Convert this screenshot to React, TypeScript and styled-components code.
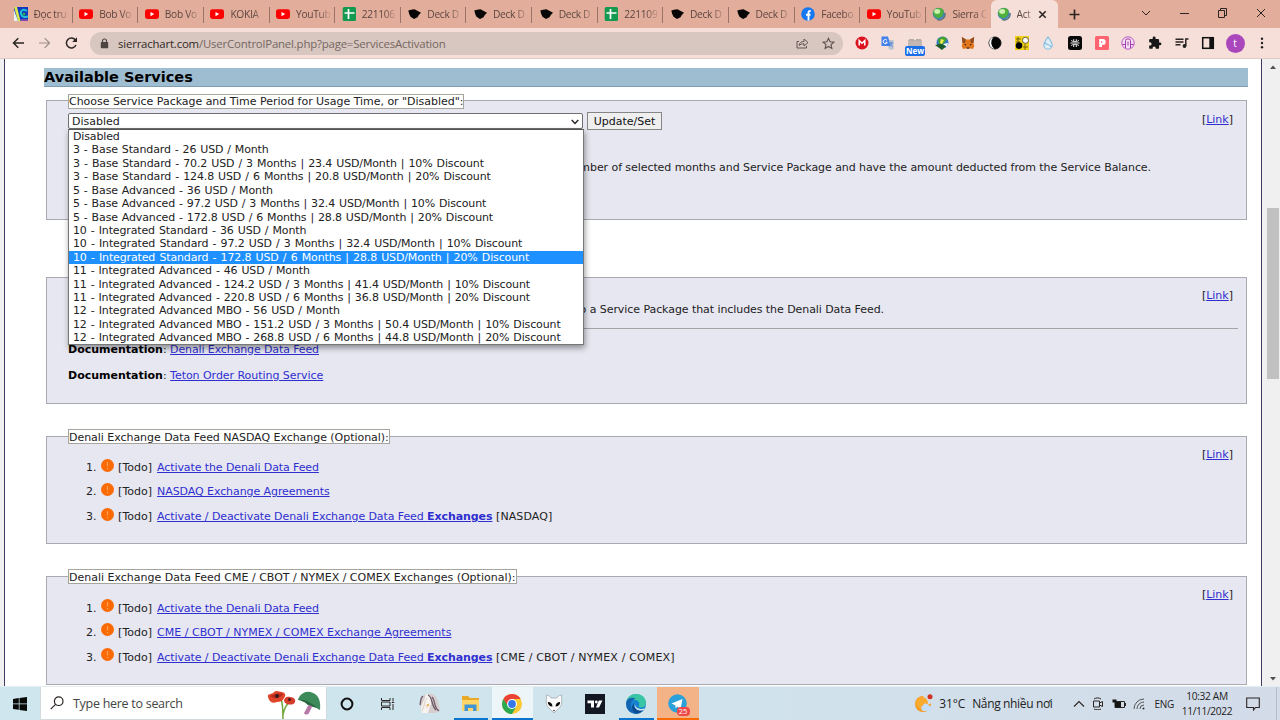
import React from "react";
import styled, { createGlobalStyle, css } from "styled-components";

const GlobalStyle = createGlobalStyle`
  * { box-sizing: border-box; }
  body { margin: 0; background: #fff; overflow: hidden; }
  svg { display: block; flex: none; }
`;
const uiFont = `"Open Sans", "Noto Sans", sans-serif`;
const pageFont = `"DejaVu Sans", Verdana, sans-serif`;

const Screen = styled.div`
  width: 1280px; height: 720px; display: flex; flex-direction: column; overflow: hidden;
  font-family: ${uiFont};
`;

/* ---------- browser chrome ---------- */
const TabStrip = styled.div`
  height: 28px; flex: none; background: #e3ad9b; display: flex; align-items: stretch; padding-left: 7px;
`;
const Tab = styled.div<{ $noLine?: boolean }>`
  width: 65.65px; flex: none; display: flex; align-items: center; padding-left: 6.5px; gap: 6px;
  ${(p) => !p.$noLine && css`
    background: linear-gradient(#9b7468, #9b7468) right 7px / 1px 16px no-repeat;
  `}
`;
const ActiveTab = styled.div`
  width: 67px; flex: none; display: flex; align-items: center; padding-left: 6px; gap: 6px;
  background: #f5dfd8; border-radius: 6px 6px 0 0; margin-left: -1px;
`;
const TabTitle = styled.span<{ $w: number }>`
  width: ${(p) => p.$w}px; white-space: nowrap; font-size: 10.2px; line-height: 28px; color: #5c4640;
  letter-spacing: -0.3px;
  mask-image: linear-gradient(90deg, #000 65%, rgba(0, 0, 0, 0.15) 100%);
`;
const WindowButtons = styled.div`
  margin-left: auto; display: flex; align-items: center; gap: 27.5px; padding: 0 14.5px 2px 0;
`;
const NewTab = styled.div` display: flex; align-items: center; padding-left: 11px; `;

const Toolbar = styled.div`
  height: 31px; flex: none; background: #f5dfd8; border-bottom: 1px solid #dccbc6; display: flex; align-items: center; padding-left: 12px;
`;
const NavButtons = styled.div` display: flex; gap: 14px; width: 78px; `;
const Omnibox = styled.div`
  width: 753px; height: 23px; border-radius: 12px; background: #d8c6c0; display: flex; align-items: center; padding: 0 8px 0 10px;
  font-size: 11.4px; color: #746661; letter-spacing: -0.18px;
`;
const Url = styled.span` margin-left: 9px; flex: 1; white-space: nowrap; b { font-weight: 400; color: #2f2927; } `;
const OmniIcons = styled.div` display: flex; gap: 13px; align-items: center; `;
const Extensions = styled.div` display: flex; padding-left: 5.5px; `;
const Ext = styled.div` width: 26.67px; height: 24px; display: flex; align-items: center; justify-content: center; flex: none; `;
const NewBadge = styled.span`
  width: 20px; height: 10px; border-radius: 2px; background: #1a6fe8; color: #fff; font-size: 8px; line-height: 10px; font-weight: 700;
  text-align: center; margin-top: -1px;
`;
const ExtStack = styled.div` display: flex; flex-direction: column; align-items: center; padding-top: 8px; `;
const Avatar = styled.div`
  width: 19px; height: 19px; border-radius: 50%; background: #ab47bc; color: #fff; font-size: 10px; line-height: 18px; text-align: center;
`;

/* ---------- page ---------- */
const Viewport = styled.div` height: 627px; flex: none; display: flex; background: #f0f0f0; overflow: hidden; `;
const Page = styled.main`
  width: 1258px; margin-left: 4px; border: solid #3f3c66; border-width: 0 1px; background: #fff; padding: 9px 13px 0 41px;
  font: 11px/13px ${pageFont}; color: #222; flex: none; overflow: hidden;
`;
const Heading = styled.h2`
  margin: 0 0 0 -2px; height: 19px; width: 1204px; background: #9fbdd0; border-bottom: 1px solid #7d9db5; color: #000;
  font: bold 14.5px/19px ${pageFont}; white-space: nowrap;
`;
const Section = styled.section<{ $h: number; $mt: number }>`
  width: 1201px; height: ${(p) => p.$h}px; margin-top: ${(p) => p.$mt}px; border: 1px solid #a9a9b2; background: #e7e7f1;
  padding: 0 8px 0 21px; display: flex; flex-direction: column; align-items: stretch;
`;
const Legend = styled.div<{ $w: number; $ls?: number; $drop?: number }>`
  width: ${(p) => p.$w}px; height: 15px; margin-top: ${(p) => -8 + (p.$drop || 0)}px; flex: none; border: 1px solid #a5a59d; background: #fff;
  line-height: ${(p) => (p.$drop ? 14 : 15)}px; white-space: nowrap; letter-spacing: ${(p) => p.$ls || 0}px;
`;
const Split = styled.div` display: flex; justify-content: space-between; padding-right: 5px; `;
const LinkTag = styled.span` margin-top: 3px; line-height: 15px; `;
const A = styled.a<{ $ls?: number }>`
  color: #2f2fd0; text-decoration: underline; text-underline-offset: 1px; letter-spacing: ${(p) => p.$ls || 0}px;
`;
const FormRow = styled.div` display: flex; gap: 4px; margin-top: 3px; height: 18px; align-items: center; `;
const Select = styled.div`
  position: relative; width: 515px; height: 16px; border: 1px solid #6f6f6f; border-radius: 2px; background: #fff; display: flex;
  align-items: center; justify-content: space-between; padding: 1px 3px 0;
`;
const Menu = styled.div`
  position: absolute; z-index: 2; left: -1px; top: 15px; width: 516px; height: 216px; border: 1px solid #777; border-top-color: #555; background: #fff;
  box-shadow: 1px 3px 6px rgba(0, 0, 0, 0.4); display: flex; flex-direction: column; overflow: hidden;
`;
const Option = styled.div<{ $on?: boolean; $ws: number }>`
  height: 13.43px; line-height: 13.4px; padding-left: 4px; white-space: nowrap; flex: none;
  word-spacing: ${(p) => 0.7 + p.$ws}px; letter-spacing: -0.135px;
  ${(p) => p.$on && css` background: #1e90ff; color: #fff; `}
`;
const Button = styled.button`
  width: 75px; height: 18px; padding: 1px 0 0; border: 1px solid #858585; background: #efefef; font: 11px/14px ${pageFont}; color: #111;
`;
const HiddenControl = styled.div` width: 60px; height: 18px; margin-top: 12px; border: 1px solid #858585; background: #efefef; flex: none; `;
const Note = styled.p<{ $mt: number; $w: number }>`
  margin: ${(p) => p.$mt}px 0 0; width: ${(p) => p.$w}px; text-align: right; white-space: nowrap; letter-spacing: -0.07px;
`;
const Rule = styled.div` height: 1px; background: #a3a3a8; margin-top: 12px; flex: none; `;
const Doc = styled.p<{ $mt: number }>` margin: ${(p) => p.$mt}px 0 0; b { color: #000; } `;
const Todos = styled.div<{ $drop: number }>`
  padding-left: 18px; margin-top: 16px; display: flex; flex-direction: column;
  svg { transform: translateY(${(p) => -p.$drop}px); }
  padding-top: ${(p) => p.$drop}px;
`;
const Todo = styled.div` height: 24.4px; line-height: 15px; display: flex; white-space: pre; svg { margin: -1px 4.6px 0 4px; } `;
const Tag = styled.span<{ $w?: number; $ls?: number }>`
  ${(p) => p.$w && css` width: ${p.$w}px; `} letter-spacing: ${(p) => p.$ls || 0}px;
`;

const ScrollBar = styled.div`
  margin-left: auto; width: 14px; display: flex; flex-direction: column; align-items: center; padding: 6px 0 5px;
`;
const Thumb = styled.div` width: 12px; height: 171px; background: #c1c1c1; margin: 139px 0 auto; `;

/* ---------- taskbar ---------- */
const Taskbar = styled.footer`
  height: 34px; flex: none; display: flex; align-items: stretch; background: linear-gradient(90deg, #cfe6ee, #cfe4ec 45%, #d3dbe9);
  border-top: 1px solid #e4edf2;
`;
const Start = styled.div` width: 40px; display: flex; align-items: center; justify-content: center; `;
const Search = styled.div`
  width: 287px; margin-right: -1px; background: #fff; border: 1px solid #d2dadd; border-top: 0; display: flex; align-items: center;
  padding: 0 4px 0 9px; font-size: 12.5px; color: #444; letter-spacing: -0.28px; gap: 9px; white-space: nowrap;
  svg:last-child { margin-left: auto; }
`;
const AppSlot = styled.div<{ $line?: string; $bg?: string }>`
  width: 41.4px; display: flex; align-items: center; justify-content: center; position: relative;
  background: ${(p) => p.$bg || "transparent"};
  ${(p) => p.$line && css` box-shadow: inset 0 -2px ${p.$line}; `}
  ${(p) => p.$line && !p.$bg && css` margin: 0 3.5px; width: 34.4px; `}
`;
const Count = styled.span`
  position: absolute; right: 9px; bottom: 4px; width: 13px; height: 9px; border-radius: 4px; background: #f04848; color: #fff; font-size: 7.5px;
  line-height: 9px; text-align: center;
`;
const Tray = styled.div` margin-left: auto; display: flex; align-items: center; color: #222; white-space: nowrap; `;
const Weather = styled.span` font-size: 12px; margin: 0 20px 0 6px; display: flex; gap: 7px; letter-spacing: -0.1px; em { font-style: normal; letter-spacing: -0.36px; } `;
const TrayIcons = styled.div` display: flex; gap: 7.5px; align-items: center; `;
const Lang = styled.span` font-size: 10px; margin-left: 9.5px; letter-spacing: -0.3px; `;
const Clock = styled.div` width: 56px; margin: 0 11px 0 5px; text-align: center; font-size: 10.2px; line-height: 15px; letter-spacing: -0.35px; `;
const Edge = styled.div` width: 4px; height: 100%; margin-left: 16px; border-left: 1px solid #b5bdc9; `;

/* ---------- icons ---------- */
const YouTube = () => (
  <svg width="14" height="14" viewBox="0 0 14 14"><rect y="2.2" width="14" height="9.8" rx="2.4" fill="#f00" /><path d="M5.5 5v4.2L9.2 7.1z" fill="#fff" /></svg>
);
const Sheet = () => (
  <svg width="14" height="14" viewBox="0 0 14 14"><rect x=".7" width="13.3" height="14" rx="1.5" fill="#149a50" /><path d="M6.500 2v10M2.500 6h10" stroke="#fff" strokeWidth="1.700" /></svg>
);
const Deck = () => (
  <svg width="14" height="14" viewBox="0 0 14 14"><path d="M1.300 3.500 4 2.800 7.500 2.200 14 5.800 11.800 8 10.500 10.300 7 12 3.500 9.800 2.200 7z" fill="#080606" /></svg>
);
const Globe = () => (
  <svg width="14" height="14" viewBox="0 0 14 14"><path d="M5 12.500c5 1.500 8.500-2 8-6.500" stroke="#5d7183" fill="none" strokeWidth="1.600" /><circle cx="6.600" cy="6.600" r="5.900" fill="#3f86b4" /><path d="M1.200 4.500C3 .5 9 0 11 2.600c2 3-1 8-4.600 8.600C2.500 10.600.600 7 1.200 4.500z" fill="#4fae3c" /><ellipse cx="5.200" cy="4.500" rx="3" ry="2.400" fill="#c9f0ac" /></svg>
);
const Facebook = () => (
  <svg width="14" height="14" viewBox="0 0 14 14"><circle cx="7" cy="7" r="6.800" fill="#1577f2" /><path d="M7.500 13.500V6c0-1.600.6-2.300 2.300-2.100M5 7.700h4.500" stroke="#fff" strokeWidth="1.900" fill="none" /></svg>
);
const Novel = () => (
  <svg width="14" height="14" viewBox="0 0 14 14"><rect width="14" height="14" fill="#1238c0" /><path d="M0 0h3l3.500 14H4z" fill="#d9e84a" /><path d="M0 3l4 11H0z" fill="#e8f2f4" /><path d="M13 4C9 1 6 4 7 7s4 4 7 2" stroke="#23c2da" strokeWidth="2" fill="none" /><circle cx="10" cy="7" r="1.500" fill="#2cad54" /><path d="M7 13h7" stroke="#e9579b" /></svg>
);
const line = { fill: "none", stroke: "#2c2523", strokeWidth: 1.5 } as const;

type Kind = "yt" | "sheet" | "deck" | "fb" | "globe" | "novel";
const favicons: Record<Kind, React.ReactElement> = { yt: <YouTube />, sheet: <Sheet />, deck: <Deck />, fb: <Facebook />, globe: <Globe />, novel: <Novel /> };
const tabs: [Kind, string][] = [
  ["novel", "Đọc tru"], ["yt", "Bob Vo"], ["yt", "Bob Vo"], ["yt", "KOKIA"], ["yt", "YouTub"], ["sheet", "221106"],
  ["deck", "Deck D"], ["deck", "Deck D"], ["deck", "Deck D"], ["sheet", "221109"], ["deck", "Deck D"], ["deck", "Deck D"],
  ["fb", "Facebo"], ["yt", "YouTub"], ["globe", "Sierra C"],
];

const extensions: React.ReactElement[] = [
  <svg width="14" height="14" viewBox="0 0 14 14"><circle cx="7" cy="7" r="6.500" fill="#dc1420" /><path d="M4.200 9.500v-5L7 7.300l2.800-2.800v5" stroke="#fff" strokeWidth="1.500" fill="none" /></svg>,
  <svg width="14" height="14" viewBox="0 0 14 14"><path d="M6 4h6.500v9.500H8z" fill="#b8c2d2" /><path d="M.5.5H7l2.600 9.500H.5z" fill="#4480ec" /><path d="M6 4.300a2.100 2.100 0 1 0 .3 2H4.600" stroke="#fff" fill="none" /><path d="M8.500 7h4M10.500 6c0 2-1 3.500-2 4M9.500 8l2.500 3" stroke="#4c80cf" strokeWidth=".8" fill="none" /></svg>,
  <ExtStack><svg width="14" height="8" viewBox="0 0 14 8"><rect x="0" y="1" width="14" height="7" rx="1" fill="#c2b7b3" /><rect x="1" y="0" width="5" height="2" fill="#b8aca8" /><rect x="8" y="0" width="5" height="2" fill="#b8aca8" /></svg><NewBadge>New</NewBadge></ExtStack>,
  <svg width="14" height="14" viewBox="0 0 14 14"><circle cx="7.500" cy="6.500" r="6" fill="#357ac0" /><path d="M3 3l5-2.500 4 2-3 5-5 1z" fill="#49a22e" /><path d="M6 3l3 1-2 4-2-1z" fill="#f2ec54" /><path d="M0 9l5-1 7 1-5 5z" fill="#1d5b28" /><path d="M8 8l5-1-1 4z" fill="#fff" /></svg>,
  <svg width="14" height="14" viewBox="0 0 14 14"><path d="M.8 1 5 3.500h4L13.200 1l-.7 6 .8 3-1.300 3-3.300-.8-1.700 1-1.700-1L2 13 .7 10l.8-3z" fill="#e2761b" /><path d="M.8 1 5 3.500 4 7H1.500zM13.200 1 9 3.500 10 7h2.500z" fill="#8f4c20" /><path d="m5 8-2 .5 2 1zM9 8l2 .5-2 1zM5.500 11.500h3v1h-3z" fill="#222" /></svg>,
  <svg width="14" height="14" viewBox="0 0 14 14"><circle cx="7" cy="7" r="6" fill="#050505" stroke="#111" /><path d="M4.500 1.700a8 8 0 0 0 1 10.800A6 6 0 0 1 4.500 1.700z" fill="#fff" stroke="#fff" strokeWidth=".7" /></svg>,
  <svg width="14" height="14" viewBox="0 0 14 14"><rect width="14" height="14" fill="#f0cf18" /><path d="M1 3h5M1 6h4M3 1v6M8 11h5M10 8v6" stroke="#614f07" strokeWidth=".8" /><circle cx="4" cy="9.600" r="3.300" fill="#000" /><circle cx="10.500" cy="4.300" r="3" fill="#fff" stroke="#111" strokeWidth=".6" /></svg>,
  <svg width="14" height="14" viewBox="0 0 14 14"><path d="M7 1c2 3 4.200 5 4.200 8a4.200 4.200 0 0 1-8.400 0C2.800 6 5 4 7 1zM4 6.500c1 2.800 5 1.200 6 4.500" fill="#dfedf5" stroke="#7dbbe4" strokeWidth="1.100" /></svg>,
  <svg width="14" height="14" viewBox="0 0 14 14"><rect width="14" height="14" rx="2.500" fill="#080808" /><path d="M3 4.200c1.500 2 6.500 2 8 0M3 9.800c1.500-2 6.500-2 8 0M5.700 3.200v2M8.300 3.200v2M5.700 9v2M8.300 9v2M2.500 7h9" stroke="#eee" strokeWidth="1" fill="none" /></svg>,
  <svg width="14" height="14" viewBox="0 0 14 14"><rect width="14" height="14" rx="1.500" fill="#ff6370" /><path d="M4.200 3h3.600a2.900 2.900 0 0 1 0 5.800H7V11H4.200z" fill="#fff" /><path d="M6.700 5v2" stroke="#ff6370" /></svg>,
  <svg width="14" height="14" viewBox="0 0 14 14"><circle cx="7" cy="7" r="6.200" fill="#f4dff0" stroke="#bb56c4" /><path d="M1.500 8.500h3V4.500a1.500 1.500 0 0 1 1.500-1.500h2a1.500 1.500 0 0 1 1.500 1.500v4h3M4.500 12V8M9.500 12V8M7 9.500V5.500" stroke="#a13bb0" fill="none" /></svg>,
  <svg width="14" height="14" viewBox="0 0 24 24"><path d="M20.500 11H19V7a2 2 0 0 0-2-2h-4V3.500a2.500 2.500 0 0 0-5 0V5H4a2 2 0 0 0-2 2v3.800h1.500a2.700 2.700 0 0 1 0 5.400H2V20a2 2 0 0 0 2 2h3.800v-1.500a2.700 2.700 0 0 1 5.400 0V22H17a2 2 0 0 0 2-2v-4h1.500a2.500 2.500 0 0 0 0-5z" fill="#171717" /></svg>,
  <svg width="14" height="14" viewBox="0 0 14 14"><path d="M.5 3.200h8M.5 6h8M.5 8.800h5" {...line} strokeWidth={1.400} /><path d="M13.500 3h-2.700v7" {...line} /><circle cx="9.500" cy="10" r="1.900" fill="#222" /></svg>,
  <svg width="14" height="14" viewBox="0 0 14 14"><rect x="1.700" y="1.700" width="10.600" height="10.600" {...line} stroke="#111" /><path d="M8.300 1.700h4v10.600h-4z" fill="#111" /></svg>,
  <Avatar>t</Avatar>,
  <svg width="14" height="14" viewBox="0 0 14 14"><g fill="#222"><circle cx="7" cy="2.800" r="1.200" /><circle cx="7" cy="7" r="1.200" /><circle cx="7" cy="11.200" r="1.200" /></g></svg>,
];

const Chrome = () => (
  <>
    <TabStrip>
      {tabs.map(([kind, title], i) => (
        <Tab key={i} $noLine={i === tabs.length - 1}>{favicons[kind]}<TabTitle $w={34}>{title}</TabTitle></Tab>
      ))}
      <ActiveTab>
        <Globe /><TabTitle $w={15}>Act</TabTitle>
        <svg width="9" height="9" viewBox="0 0 9 9"><path d="m1.300 1.300 6.400 6.400m0-6.400L1.300 7.700" {...line} strokeWidth={1.600} /></svg>
      </ActiveTab>
      <NewTab><svg width="11" height="11" viewBox="0 0 11 11"><path d="M5.500.5v10M.5 5.500h10" {...line} strokeWidth={1.700} /></svg></NewTab>
      <WindowButtons>
        <svg width="10" height="10" viewBox="0 0 10 10"><path d="m1 3 4 4 4-4" {...line} strokeWidth={1} /></svg>
        <svg width="11" height="10" viewBox="0 0 11 10"><path d="M1 5.500h9" {...line} strokeWidth={1} /></svg>
        <svg width="11" height="10" viewBox="0 0 11 10"><path d="M1.500 2.500h6v7h-6zM3.500 2.500v-2h6v7h-2" {...line} strokeWidth={1} /></svg>
        <svg width="10" height="10" viewBox="0 0 10 10"><path d="m1 1 8 8m0-8L1 9" {...line} strokeWidth={1} /></svg>
      </WindowButtons>
    </TabStrip>
    <Toolbar>
      <NavButtons>
        <svg width="13" height="12" viewBox="0 0 13 12"><path d="M12 6H1.500M6.300 1.200 1.500 6l4.800 4.800" {...line} /></svg>
        <svg width="12" height="12" viewBox="0 0 12 12"><path d="M0 6h10.500M5.700 1.200 10.500 6l-4.800 4.800" {...line} stroke="#9d8d88" strokeWidth={1.200} /></svg>
        <svg width="13" height="12" viewBox="0 0 13 12"><path d="M11 8A5 5 0 1 1 10.300 2.800L11.500 4" {...line} /><path d="M12 .2v4.800H7.200z" fill="#2c2523" /></svg>
      </NavButtons>
      <Omnibox>
        <svg width="9" height="11" viewBox="0 0 9 11"><rect x=".8" y="4" width="7.400" height="6.300" rx=".8" fill="#4c4542" /><path d="M2.500 4.500V3a2 2 0 0 1 4 0v1.500" {...line} stroke="#4c4542" strokeWidth={1.100} /></svg>
        <Url><b>sierrachart.com</b>/UserControlPanel.php?page=ServicesActivation</Url>
        <OmniIcons>
          <svg width="13" height="12" viewBox="0 0 13 12"><path d="M3 4.500H1V11h9.500V9M3 8.500c.5-3 2.500-4 5-4V2L12 5.600 8 9V6.800c-2.300 0-3.800.5-5 1.700z" {...line} stroke="#625652" strokeWidth={1} /></svg>
          <svg width="13" height="13" viewBox="0 0 24 24"><path d="m12 2.500 2.900 6.400 7 .7-5.300 4.600 1.600 6.800-6.200-3.600L5.800 21l1.600-6.800-5.300-4.600 7-.7z" {...line} stroke="#5b4f4b" strokeWidth={2} /></svg>
        </OmniIcons>
      </Omnibox>
      <Extensions>{extensions.map((icon, i) => <Ext key={i}>{icon}</Ext>)}</Extensions>
    </Toolbar>
  </>
);

const options = [
  "Disabled", "3 - Base Standard - 26 USD / Month", "3 - Base Standard - 70.2 USD / 3 Months | 23.4 USD/Month | 10% Discount",
  "3 - Base Standard - 124.8 USD / 6 Months | 20.8 USD/Month | 20% Discount", "5 - Base Advanced - 36 USD / Month",
  "5 - Base Advanced - 97.2 USD / 3 Months | 32.4 USD/Month | 10% Discount", "5 - Base Advanced - 172.8 USD / 6 Months | 28.8 USD/Month | 20% Discount",
  "10 - Integrated Standard - 36 USD / Month", "10 - Integrated Standard - 97.2 USD / 3 Months | 32.4 USD/Month | 10% Discount",
  "10 - Integrated Standard - 172.8 USD / 6 Months | 28.8 USD/Month | 20% Discount", "11 - Integrated Advanced - 46 USD / Month",
  "11 - Integrated Advanced - 124.2 USD / 3 Months | 41.4 USD/Month | 10% Discount", "11 - Integrated Advanced - 220.8 USD / 6 Months | 36.8 USD/Month | 20% Discount",
  "12 - Integrated Advanced MBO - 56 USD / Month", "12 - Integrated Advanced MBO - 151.2 USD / 3 Months | 50.4 USD/Month | 10% Discount",
  "12 - Integrated Advanced MBO - 268.8 USD / 6 Months | 44.8 USD/Month | 20% Discount",
];
const wordGap = (o: string) => (o.includes("Base") ? -0.1 : o.includes("Standard") ? 0 : o.includes("MBO") ? 0 : -0.1) + (o.includes("Standard") && o.includes("|") ? 0.13 : 0);

const SectionLink = () => <LinkTag>[<A>Link</A>]</LinkTag>;
const Warn = () => (
  <svg width="13" height="13" viewBox="0 0 13 13"><circle cx="6.500" cy="6.500" r="6.500" fill="#fa6a05" /><path d="M6.500 3v4.500M6.500 9v1.200" stroke="#ffa45c" strokeWidth="1.100" /></svg>
);
type ExchangeProps = { h: number; title: string; w: number; ls: number; agreement: string; agreementLs: number; names: string; namesLs: number; drop: number };
const Exchange = (p: ExchangeProps) => (
  <Section $h={p.h} $mt={32}>
    <Legend $w={p.w} $ls={p.ls}>{p.title}</Legend>
    <Split>
      <Todos $drop={p.drop}>
        <Todo>1.<Warn /><Tag $w={39}>[Todo]</Tag><A $ls={-0.1}>Activate the Denali Data Feed</A></Todo>
        <Todo>2.<Warn /><Tag $w={39}>[Todo]</Tag><A $ls={p.agreementLs}>{p.agreement}</A></Todo>
        <Todo>3.<Warn /><Tag $w={39}>[Todo]</Tag><A $ls={-0.09}>Activate / Deactivate Denali Exchange Data Feed <b>Exchanges</b></A><Tag $ls={p.namesLs}> [{p.names}]</Tag></Todo>
      </Todos>
      <SectionLink />
    </Split>
  </Section>
);

const Content = () => (
  <Viewport>
    <Page>
      <Heading>Available Services</Heading>
      <Section $h={120} $mt={13}>
        <Legend $w={396} $ls={-0.03} $drop={1}>Choose Service Package and Time Period for Usage Time, or "Disabled":</Legend>
        <Split>
          <FormRow>
            <Select>
              Disabled
              <svg width="8" height="6" viewBox="0 0 8 6"><path d="m.7 1 3.300 3.500L7.300 1" {...line} /></svg>
              <Menu>{options.map((o, i) => <Option key={o} $on={i === 9} $ws={wordGap(o)}>{o}</Option>)}</Menu>
            </Select>
            <Button>Update/Set</Button>
          </FormRow>
          <SectionLink />
        </Split>
        <HiddenControl />
        <Note $mt={1} $w={1083}>number of selected months and Service Package and have the amount deducted from the Service Balance.</Note>
      </Section>
      <Section $h={127} $mt={57}>
        <Legend $w={396} />
        <Split><span /><SectionLink /></Split>
        <Note $mt={0} $w={816}>to a Service Package that includes the Denali Data Feed.</Note>
        <Rule />
        <Doc $mt={14}><b>Documentation</b>: <A $ls={-0.12}>Denali Exchange Data Feed</A></Doc>
        <Doc $mt={13}><b>Documentation</b>: <A $ls={-0.04}>Teton Order Routing Service</A></Doc>
      </Section>
      <Exchange h={108} w={322} ls={-0.04} drop={0} title="Denali Exchange Data Feed NASDAQ Exchange (Optional):" agreement="NASDAQ Exchange Agreements" agreementLs={-0.08} names="NASDAQ" namesLs={0.1} />
      <Exchange h={109} w={449} ls={0} drop={1} title="Denali Exchange Data Feed CME / CBOT / NYMEX / COMEX Exchanges (Optional):" agreement="CME / CBOT / NYMEX / COMEX Exchange Agreements" agreementLs={0.02} names="CME / CBOT / NYMEX / COMEX" namesLs={0.15} />
    </Page>
    <ScrollBar>
      <svg width="6" height="4" viewBox="0 0 6 4"><path d="M0 4 3 .5 6 4z" fill="#505050" /></svg>
      <Thumb />
      <svg width="6" height="4" viewBox="0 0 6 4"><path d="m0 0 3 3.500L6 0z" fill="#505050" /></svg>
    </ScrollBar>
  </Viewport>
);

const TaskBar = () => (
  <Taskbar>
    <Start><svg width="14" height="14" viewBox="0 0 14 14"><path d="M0 2 5.800 1.100v5.500H0zM6.500 1 14 0v6.600H6.500zM0 7.300h5.800v5.500L0 12zM6.500 7.300H14V14l-7.500-1z" fill="#080808" /></svg></Start>
    <Search>
      <svg width="14" height="14" viewBox="0 0 14 14"><circle cx="8.700" cy="5.200" r="4.300" {...line} strokeWidth={1.200} /><path d="M5.600 8.300.7 13.200" {...line} strokeWidth={1.200} /></svg>
      Type here to search
      <svg width="55" height="32" viewBox="0 0 55 32">
        <path d="M14 12c2 5 2 12 2 20M23 14c-4 4-6 8-7 14" stroke="#6fa53c" strokeWidth="1.500" fill="none" />
        <path d="M1 10C0 6 5 8 7 5c3-2 5 0 8 0 4 1 4 4 2 6-1 3-4 4-7 4-4 2-8 0-9-5z" fill="#e04529" /><path d="M3 9c4-2 9-3 13-2-2 4-8 6-13 2z" fill="#b82b1e" /><circle cx="10" cy="9" r="1.900" fill="#301a1a" />
        <path d="M17 13c1-3 3-4 6-3 4 0 6 3 5 5-1 3-5 3-8 2-2-1-3-2-3-4z" fill="#d63c2a" /><circle cx="22.500" cy="12.500" r="1.600" fill="#4a1c1c" />
        <path d="M42 17 37 26c1 2 4 2 5 0l4-8z" fill="#b77aa8" /><path d="M31 13c2-7 9-10 15-7 6 2 8 9 7 17-3-2-4-3-7-3-3-3-5-1-7-4-2-1-5-3-8-3z" fill="#3d8a5a" /><path d="M31 13c6-1 13 2 22 10-3-2-4-3-7-3-3-3-5-1-7-4-2-1-5-3-8-3z" fill="#28663f" />
      </svg>
    </Search>
    <AppSlot><svg width="14" height="14" viewBox="0 0 14 14"><circle cx="7" cy="7" r="5.400" fill="none" stroke="#111" strokeWidth="2" /></svg></AppSlot>
    <AppSlot><svg width="16" height="14" viewBox="0 0 16 14"><path d="M1.500 1v2.500h8.500V1M1.500 13v-2.500h8.500V13M1.500 5h8.500v4H1.500zM13 1v3.500M13 7v6M11.800 5.500h2.400" {...line} strokeWidth={1} /></svg></AppSlot>
    <AppSlot><svg width="21" height="21" viewBox="0 0 21 21"><path d="M3 19C0 12 1 4 7 1c6-2 10 1 12 7l2 9-4 3H4z" fill="#d6cdce" /><path d="M7 1c4 0 5 4 5 9l-3 10H3C0 12 5 11 7 1z" fill="#f8f3ef" /><path d="M13 4c4 4 1 10 7 14M9 2c5 2 3 11 8 15M4 3C1 5 2 8 1 12" stroke="#6c5966" fill="none" strokeWidth="1.300" /><path d="M8 5C5 8 6 12 3 18" stroke="#d8d0cc" fill="none" /><path d="M6 12h4l-2 4z" fill="#f1d9c6" /><circle cx="9" cy="12" r="1" fill="#d9a83d" /></svg></AppSlot>
    <AppSlot $line="#0a74cf"><svg width="19" height="17" viewBox="0 0 19 17"><path d="M1 1h6l2 2h9v13H1z" fill="#e9a927" /><path d="M1 5h17v11H1z" fill="#fdd667" /><path d="M3.500 16V9.500h12V16H12v-3H7v3z" fill="#3f95d6" /></svg></AppSlot>
    <AppSlot $bg="#edf5f8" $line="#0a74cf"><svg width="20" height="20" viewBox="0 0 20 20"><circle cx="10" cy="10" r="10" fill="#fcc934" /><path d="M10 5H18.660A10 10 0 0 0 1.340 5l4.300 7.500z" fill="#ea4335" /><path d="M1.340 5A10 10 0 0 0 10 20l4.330-7.500L10 10H4.500z" fill="#2da94f" /><circle cx="10" cy="10" r="5" fill="#fff" /><circle cx="10" cy="10" r="3.900" fill="#3377e8" /></svg></AppSlot>
    <AppSlot><svg width="18" height="20" viewBox="0 0 18 20"><path d="M1.500 1c3 .5 4 1.500 4.500 3h6c.5-1.500 1.500-2.500 4.500-3l.3 8c-.8 4-2.800 5-4.300 6.500L9 19l-3.500-3.500C4 14 2 13 1.200 9z" fill="#fbfbfb" stroke="#9ca3a6" strokeWidth=".7" /><path d="M2.800 8c3 0 4.700 2 4.700 4.500-3 0-4.700-2-4.700-4.500zM15.200 8c-3 0-4.700 2-4.700 4.500 3 0 4.700-2 4.700-4.500zM8 16h2l-1 1.500z" fill="#080808" /></svg></AppSlot>
    <AppSlot><svg width="20" height="20" viewBox="0 0 20 20"><rect width="20" height="20" fill="#121722" /><path d="M2.500 6.500h6.500v7H6V9.300H2.500zM13.800 6.500H17.500l-3.500 7h-3z" fill="#fff" /><circle cx="11.300" cy="8" r="1.400" fill="#fff" /></svg></AppSlot>
    <AppSlot $line="#0a74cf"><svg width="20" height="20" viewBox="0 0 20 20"><circle cx="10" cy="10" r="10" fill="#1583d2" /><path d="M.3 8C1 3 5 0 10 0c6 0 10 4 10 8.500 0 3-2 5-5 5-2 0-3-1-2-2 1-2 0-5-4-5.500C5 5 2 6 .3 8z" fill="#39c6a5" /><path d="M.3 8C2 3 7 3 10 5c-4 0-6 4-5 8 1 3 3 5 6 6.900C4 20-.5 15 .3 8z" fill="#1464b4" /><path d="M8.500 9c-2 5 4 9 9.500 6.500-1.500 2-4 4-7 4.300C6 18 4 12 8.500 9z" fill="#0b4d91" /><path d="M9 9c-1 5 5 7 10 5.500l-1 1.500C13 18 7 15 9 9z" fill="#d0e5ec" /></svg></AppSlot>
    <AppSlot $bg="#f4b386" $line="#fb6b05"><svg width="19" height="19" viewBox="0 0 19 19"><circle cx="9.500" cy="9.500" r="9.300" fill="#2ba0d9" /><path d="m3.500 9.500 11-4.500-2 10-3.200-2.400-1.600 1.600-.5-3z" fill="#fff" /></svg><Count>25</Count></AppSlot>
    <Tray>
      <svg width="19" height="20" viewBox="0 0 19 20"><circle cx="9" cy="10" r="8" fill="#f59a20" /><circle cx="13" cy="6" r="5" fill="#d4deeb" /><circle cx="8" cy="9" r="6" fill="#f9ab30" /><path d="M9 17a3 3 0 0 1 0-5.500c1-3 5-2 5.500 0 4 0 4 5.500 1 5.500z" fill="#c5ddf8" /><circle cx="16" cy="2.700" r="2.500" fill="#d23222" /></svg>
      <Weather>31°C<em>Nắng nhiều nơi</em></Weather>
      <TrayIcons>
        <svg width="12" height="8" viewBox="0 0 12 8"><path d="m1 6.500 5-5 5 5" {...line} strokeWidth={1.100} /></svg>
        <svg width="12" height="13" viewBox="0 0 12 13"><path d="M1.500 4h6v6h-6zM7.500 6l3-1.500v5l-3-1.500M2 2c2-1.500 5-1.500 7 0M2 12c2 1 5 1 7 0" {...line} strokeWidth={1} /></svg>
        <svg width="14" height="12" viewBox="0 0 14 12"><path d="M3 3.500h9.500v6H3zM13.500 5v3" {...line} strokeWidth={1} /><path d="M3 4h6v5.500H3zM.5 1.500h4v3h-4z" fill="#151515" /></svg>
        <svg width="12" height="12" viewBox="0 0 12 12"><path d="M1 11A10 10 0 0 1 11 1M4 11a7 7 0 0 1 7-7M7 11a4 4 0 0 1 4-4" {...line} stroke="#555" strokeWidth={1} /><circle cx="10.500" cy="10.500" r="1" fill="#333" /></svg>
      </TrayIcons>
      <Lang>ENG</Lang>
      <Clock>10:32 AM<br />11/11/2022</Clock>
      <svg width="14" height="14" viewBox="0 0 14 14"><path d="M.7 1h12.600v9.500H9.500L7.500 13v-2.500H.7z" {...line} strokeWidth={1.100} /></svg>
      <Edge />
    </Tray>
  </Taskbar>
);

export default function App() {
  return (
    <Screen>
      <GlobalStyle />
      <Chrome />
      <Content />
      <TaskBar />
    </Screen>
  );
}
